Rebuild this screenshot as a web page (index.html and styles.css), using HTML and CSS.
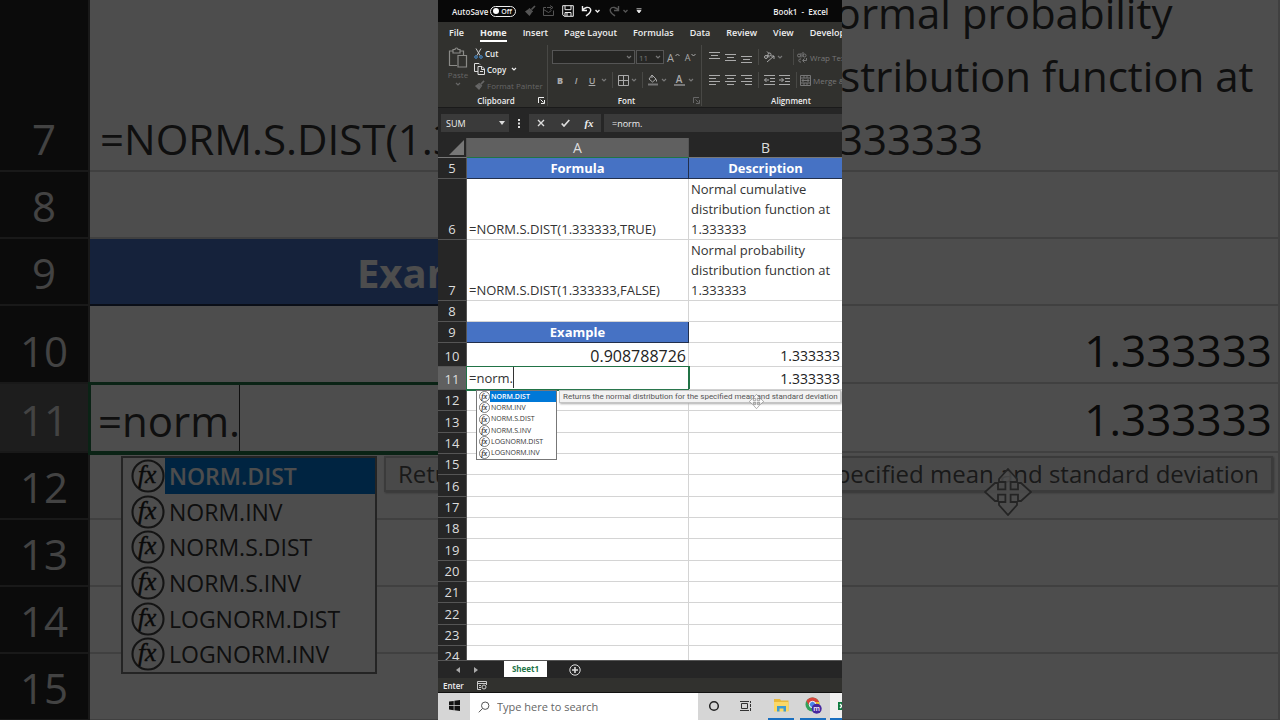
FILE: index.html
```html
<!doctype html>
<html lang="en">
<head>
    <meta charset="UTF-8">
    <meta name="viewport" content="width=device-width, initial-scale=1.0">
    <title>Book1 - Excel</title>
    <link rel="stylesheet" href="styles.css">
</head>
<body>
<!-- shared icons -->
<svg class="defs" aria-hidden="true">
    <symbol id="fx" viewBox="0 0 16 16">
        <circle cx="8" cy="8" r="7.300" fill="none" stroke="#444" stroke-width="1"/>
        <text x="7.600" y="11.200" text-anchor="middle" font-family="Liberation Serif, serif" font-style="italic" font-size="12" fill="#222" stroke="#222" stroke-width=".2">fx</text>
    </symbol>
    <symbol id="move" viewBox="0 0 24 24">
        <path d="M12 .5l4.500 5v1.500h-3.200v3.700H17V7.500h1.500l5 4.500-5 4.500H17v-3.200h-3.700V17h3.200v1.500l-4.500 5-4.500-5V17h3.200v-3.700H7v3.200H5.500l-5-4.500 5-4.500H7v3.200h3.700V7H7.500V5.500z" fill="#fff" fill-opacity=".8" stroke="#777" stroke-width=".9"/>
    </symbol>
    <symbol id="caret" viewBox="0 0 8 8">
        <path d="M2 3l2 2 2-2" fill="none" stroke="currentColor" stroke-width="1.2"/>
    </symbol>
    <symbol id="brush" viewBox="0 0 12 12">
        <path d="M11 1L7.500 4.500M5 3.500l3.500 3.500" fill="none" stroke="currentColor" stroke-width="1.700"/>
        <path d="M4.500 4L1 6.500l4.500 4.500L8 7.500z" fill="currentColor"/>
    </symbol>
</svg>

<main class="stage">
    <section class="backdrop" aria-hidden="true">
        <table class="sheet large">
            <colgroup><col class="c-num"><col class="c-a"><col></colgroup>
            <tr class="r-tall">
                <th>7</th>
                <td>=NORM.S.DIST(1.333333,FALSE)</td>
                <td>Normal probability<br>distribution function at<br>1.333333</td>
            </tr>
            <tr><th>8</th><td></td><td></td></tr>
            <tr><th>9</th><td class="head">Example</td><td></td></tr>
            <tr class="r-10"><th>10</th><td class="result">0.908788726</td><td class="num">1.333333</td></tr>
            <tr class="r-11">
                <th class="on">11</th>
                <td class="editing">
                    <input class="cell-input" value="=norm." aria-label="Cell A11, enlarged" tabindex="-1">
                    <ul class="suggest">
                        <li class="on"><svg><use href="#fx"/></svg><span>NORM.DIST</span></li>
                        <li><svg><use href="#fx"/></svg><span>NORM.INV</span></li>
                        <li><svg><use href="#fx"/></svg><span>NORM.S.DIST</span></li>
                        <li><svg><use href="#fx"/></svg><span>NORM.S.INV</span></li>
                        <li><svg><use href="#fx"/></svg><span>LOGNORM.DIST</span></li>
                        <li><svg><use href="#fx"/></svg><span>LOGNORM.INV</span></li>
                    </ul>
                </td>
                <td class="num has-tip">1.333333
                    <div class="tip"><span>Returns the normal distribution for the</span><span>specified mean and standard deviation</span></div>
                    <svg class="pointer"><use href="#move"/></svg>
                </td>
            </tr>
            <tr><th>12</th><td></td><td></td></tr>
            <tr><th>13</th><td></td><td></td></tr>
            <tr><th>14</th><td></td><td></td></tr>
            <tr><th>15</th><td></td><td></td></tr>
        </table>
    </section>

    <section class="phone">
        <header class="titlebar">
            <label class="autosave">AutoSave <input type="checkbox" class="toggle"><span class="track">Off</span></label>
            <div class="quick">
                <button class="dim" aria-label="Format painter"><svg width="12" height="12"><use href="#brush"/></svg></button>
                <button class="dim" aria-label="Mail">
                    <svg width="13" height="12" viewBox="0 0 13 12" fill="none" stroke="currentColor"><path d="M4 2.500H1.500v8h10v-5M1.500 4.500l5 3 3-2M5 2.500h4M8 .500l3 2-3 2"/></svg>
                </button>
                <button aria-label="Save">
                    <svg width="12" height="12" viewBox="0 0 12 12" fill="none" stroke="currentColor"><path d="M.7.7h10.600v10.600H2.200L.7 9.800zM3 .7v4h6v-4M3 11V7.500h6V11M5 8v3"/></svg>
                </button>
                <button class="wide" aria-label="Undo">
                    <svg width="20" height="12" viewBox="0 0 20 12" fill="none" stroke="currentColor" stroke-width="1.400"><path d="M1.500 1v4.500H6M1.500 5.500C3 2.500 8 1 9.500 4S7.500 9 5 11M14.500 5l2 2 2-2"/></svg>
                </button>
                <button class="wide dim" aria-label="Redo">
                    <svg width="20" height="12" viewBox="0 0 20 12" fill="none" stroke="currentColor" stroke-width="1.400"><path d="M9.500 1v4.500H5M9.500 5.500C8 2.500 3 1 1.500 4S3.500 9 6 11M14.500 5l2 2 2-2"/></svg>
                </button>
                <button class="slim" aria-label="Customize">
                    <svg width="6" height="6" viewBox="0 0 6 6"><path d="M.5 .800h5M1 2.500h4L3 5z" fill="currentColor" stroke="currentColor" stroke-width=".8"/></svg>
                </button>
            </div>
            <h1>Book1&nbsp; -&nbsp; Excel</h1>
        </header>

        <nav class="tabs">
            <a href="#file">File</a>
            <a href="#home" class="active">Home</a>
            <a href="#insert">Insert</a>
            <a href="#layout">Page Layout</a>
            <a href="#formulas">Formulas</a>
            <a href="#data">Data</a>
            <a href="#review">Review</a>
            <a href="#view">View</a>
            <a href="#developer">Developer</a>
        </nav>

        <div class="ribbon">
            <div class="group clipboard">
                <div class="tools">
                    <button class="paste">
                        <svg width="20" height="22" viewBox="0 0 20 22" fill="none" stroke="#8a8a87" stroke-width="1.200"><path d="M9 18.500H1.500V4H5M12 4h3.500v4M5 2.500h2c0-2 3-2 3 0h2V6H5zM10 8.500h8.500V20H10z"/></svg>
                        <span>Paste</span>
                        <svg width="8" height="8"><use href="#caret"/></svg>
                    </button>
                    <div class="stack">
                        <button>
                            <svg width="9" height="11" viewBox="0 0 9 11" fill="none"><path d="M2 .500l4 7M7 .500l-4 7" stroke="#ccc"/><circle cx="2" cy="9" r="1.300" stroke="#4a8fd0"/><circle cx="7" cy="9" r="1.300" stroke="#4a8fd0"/></svg>
                            Cut
                        </button>
                        <button>
                            <svg width="11" height="12" viewBox="0 0 11 12" fill="none" stroke="#ddd"><path d="M4 8.500H.500v-8H5l1 1M4 3.500h4l2.500 2.500v5.500H4zM7.500 3.500V6.500h3M6 8.500h3"/></svg>
                            Copy <svg class="next" width="8" height="8"><use href="#caret"/></svg>
                        </button>
                        <button class="off"><svg width="11" height="11"><use href="#brush"/></svg>Format Painter</button>
                    </div>
                </div>
                <div class="caption">Clipboard
                    <svg class="launch" width="7" height="7" viewBox="0 0 7 7" fill="none" stroke="currentColor"><path d="M.5 6V.5H6M2.500 2.500l3 3M6.500 3v3.500H3"/></svg>
                </div>
            </div>

            <div class="group font">
                <div class="row fields">
                    <select class="face" aria-label="Font"><option></option></select>
                    <svg class="drop over"><use href="#caret"/></svg>
                    <select class="size" aria-label="Font size"><option>11</option></select>
                    <svg class="drop over"><use href="#caret"/></svg>
                    <button class="grow" aria-label="Increase font size">A<svg width="5" height="9" viewBox="0 0 5 9" fill="none" stroke="currentColor"><path d="M.5 3l2-2 2 2"/></svg></button>
                    <button class="shrink" aria-label="Decrease font size">A<svg width="5" height="9" viewBox="0 0 5 9" fill="none" stroke="currentColor"><path d="M.5 1l2 2 2-2"/></svg></button>
                </div>
                <div class="row">
                    <button class="w16"><b>B</b></button>
                    <button class="w16"><i>I</i></button>
                    <button class="w16"><u>U</u></button>
                    <svg class="drop"><use href="#caret"/></svg>
                    <span class="rule"></span>
                    <button class="w14" aria-label="Borders"><svg width="11" height="11" viewBox="0 0 11 11" fill="none" stroke="currentColor"><path d="M.5.500h10v10H.5zM5.500.500v10M.5 5.500h10"/></svg></button>
                    <svg class="drop"><use href="#caret"/></svg>
                    <span class="rule"></span>
                    <button class="w14" aria-label="Fill color"><svg width="12" height="12" viewBox="0 0 12 12" fill="none" stroke="currentColor"><path d="M5 1l4 4-3.500 3L2 5zM5 1v3M9.500 5.500v2"/><path d="M1 10.500h10" stroke="#777" stroke-width="2"/></svg></button>
                    <svg class="drop"><use href="#caret"/></svg>
                    <button class="w16 color" aria-label="Font color">A</button>
                    <svg class="drop"><use href="#caret"/></svg>
                </div>
                <div class="caption">Font
                    <svg class="launch faint" width="7" height="7" viewBox="0 0 7 7" fill="none" stroke="currentColor"><path d="M.5 6V.5H6M2.500 2.500l3 3M6.500 3v3.500H3"/></svg>
                </div>
            </div>

            <div class="group align">
                <div class="row">
                    <button class="w16" aria-label="Top align"><svg width="11" height="12" viewBox="0 0 11 12" stroke="currentColor"><path d="M0 1.500h11M2 4.500h7M0 7.500h11"/></svg></button>
                    <button class="w16" aria-label="Middle align"><svg width="11" height="12" viewBox="0 0 11 12" stroke="currentColor"><path d="M0 3.500h11M2 6.500h7M0 9.500h11"/></svg></button>
                    <button class="w16" aria-label="Bottom align"><svg width="11" height="12" viewBox="0 0 11 12" stroke="currentColor"><path d="M0 5.500h11M2 8.500h7M0 11.500h11"/></svg></button>
                    <span class="rule"></span>
                    <button class="w14" aria-label="Orientation"><svg width="12" height="12" viewBox="0 0 12 12" stroke="currentColor" fill="none"><circle cx="3" cy="6" r="1.500"/><circle cx="6.500" cy="3.500" r="1.500"/><path d="M4 4l2 2.500M4 .500l2 2M4 11l7-6M8 5h3v3"/></svg></button>
                    <svg class="drop"><use href="#caret"/></svg>
                    <span class="rule far"></span>
                    <button class="text"><svg width="11" height="11" viewBox="0 0 11 11" stroke="currentColor" fill="none"><circle cx="2" cy="3.500" r="1.500"/><path d="M4 1v4.500M6 0v5"/><circle cx="7.500" cy="3.500" r="1.500"/><path d="M4 7C1 6.500 1 10.500 4 10M6 8.500h3.500V6M7.500 6.500l-2 2 2 2"/></svg>Wrap Text</button>
                </div>
                <div class="row">
                    <button class="w16" aria-label="Align left"><svg width="11" height="10" viewBox="0 0 11 10" stroke="currentColor"><path d="M0 .500h11M0 3.500h7M0 6.500h11M0 9.500h7"/></svg></button>
                    <button class="w16" aria-label="Center"><svg width="11" height="10" viewBox="0 0 11 10" stroke="currentColor"><path d="M0 .500h11M2 3.500h7M0 6.500h11M2 9.500h7"/></svg></button>
                    <button class="w16" aria-label="Align right"><svg width="11" height="10" viewBox="0 0 11 10" stroke="currentColor"><path d="M0 .500h11M4 3.500h7M0 6.500h11M4 9.500h7"/></svg></button>
                    <span class="rule"></span>
                    <button class="w14" aria-label="Decrease indent"><svg width="11" height="10" viewBox="0 0 11 10" stroke="currentColor" fill="none"><path d="M0 .500h11M6 3.500h5M6 6.500h5M0 9.500h11M5 5H.500M2.500 3l-2 2 2 2"/></svg></button>
                    <button class="w16" aria-label="Increase indent"><svg width="11" height="10" viewBox="0 0 11 10" stroke="currentColor" fill="none"><path d="M0 .500h11M6 3.500h5M6 6.500h5M0 9.500h11M0 5h4.500M2.500 3l2 2-2 2"/></svg></button>
                    <span class="rule"></span>
                    <button class="text"><svg width="11" height="11" viewBox="0 0 11 11" stroke="currentColor" fill="none"><path d="M.5.500h10v10H.5zM.5 3h10M.5 8h10M4 .500V3M7 .500V3M4 8v2.500M7 8v2.500M2 5.500h7M3.500 4L2 5.500 3.500 7M7.500 4L9 5.500 7.500 7"/></svg>Merge &amp; Center</button>
                </div>
                <div class="caption">Alignment</div>
            </div>
        </div>

        <div class="formula">
            <div class="namebox">
                <input value="SUM" aria-label="Name box">
                <svg width="6" height="4" viewBox="0 0 6 4"><path d="M0 0h6L3 4z" fill="#ddd"/></svg>
            </div>
            <svg class="grip" width="2" height="9" viewBox="0 0 2 9"><path d="M0 0h2v2H0zM0 3.500h2v2H0zM0 7h2v2H0z" fill="#ddd"/></svg>
            <div class="actions">
                <button aria-label="Cancel"><svg width="8" height="8" viewBox="0 0 8 8"><path d="M1 1l6 6M7 1L1 7" stroke="#ddd" stroke-width="1.400"/></svg></button>
                <button aria-label="Enter"><svg width="9" height="8" viewBox="0 0 9 8"><path d="M.7 4.500L3 7l5.300-6" fill="none" stroke="#ddd" stroke-width="1.700"/></svg></button>
                <button class="fn" aria-label="Insert function">fx</button>
            </div>
            <input class="bar" value="=norm." aria-label="Formula bar">
        </div>

        <div class="grid">
            <table class="sheet small">
                <colgroup><col class="c-num"><col class="c-a"><col></colgroup>
                <tr class="letters">
                    <th class="corner"><svg width="15" height="15" viewBox="0 0 15 15"><path d="M15 0v15H0z" fill="#777"/></svg></th>
                    <th class="on">A</th><th>B</th>
                </tr>
                <tr><th>5</th><td class="head">Formula</td><td class="head">Description</td></tr>
                <tr class="r-tall">
                    <th>6</th>
                    <td>=NORM.S.DIST(1.333333,TRUE)</td>
                    <td>Normal cumulative<br>distribution function at<br>1.333333</td>
                </tr>
                <tr class="r-tall">
                    <th>7</th>
                    <td>=NORM.S.DIST(1.333333,FALSE)</td>
                    <td>Normal probability<br>distribution function at<br>1.333333</td>
                </tr>
                <tr><th>8</th><td></td><td></td></tr>
                <tr><th>9</th><td class="head">Example</td><td></td></tr>
                <tr class="r-10"><th>10</th><td class="result">0.908788726</td><td class="num">1.333333</td></tr>
                <tr class="r-11">
                    <th class="on">11</th>
                    <td class="editing">
                        <input class="cell-input" value="=norm." aria-label="Cell A11">
                        <ul class="suggest">
                            <li class="on"><svg><use href="#fx"/></svg><span>NORM.DIST</span></li>
                            <li><svg><use href="#fx"/></svg><span>NORM.INV</span></li>
                            <li><svg><use href="#fx"/></svg><span>NORM.S.DIST</span></li>
                            <li><svg><use href="#fx"/></svg><span>NORM.S.INV</span></li>
                            <li><svg><use href="#fx"/></svg><span>LOGNORM.DIST</span></li>
                            <li><svg><use href="#fx"/></svg><span>LOGNORM.INV</span></li>
                        </ul>
                    </td>
                    <td class="num has-tip">1.333333
                        <div class="tip">Returns the normal distribution for the specified mean and standard deviation</div>
                        <svg class="pointer"><use href="#move"/></svg>
                    </td>
                </tr>
                <tr><th>12</th><td></td><td></td></tr>
                <tr><th>13</th><td></td><td></td></tr>
                <tr><th>14</th><td></td><td></td></tr>
                <tr><th>15</th><td></td><td></td></tr>
                <tr><th>16</th><td></td><td></td></tr>
                <tr><th>17</th><td></td><td></td></tr>
                <tr><th>18</th><td></td><td></td></tr>
                <tr><th>19</th><td></td><td></td></tr>
                <tr><th>20</th><td></td><td></td></tr>
                <tr><th>21</th><td></td><td></td></tr>
                <tr><th>22</th><td></td><td></td></tr>
                <tr><th>23</th><td></td><td></td></tr>
                <tr><th>24</th><td></td><td></td></tr>
            </table>
        </div>

        <div class="sheetbar">
            <button aria-label="Previous sheet"><svg width="4" height="6" viewBox="0 0 4 6"><path d="M4 0v6L0 3z" fill="#aaa"/></svg></button>
            <button aria-label="Next sheet"><svg width="4" height="6" viewBox="0 0 4 6"><path d="M0 0v6l4-3z" fill="#aaa"/></svg></button>
            <a href="#sheet1">Sheet1</a>
            <button aria-label="New sheet"><svg width="12" height="12" viewBox="0 0 12 12" fill="none" stroke="#ddd"><circle cx="6" cy="6" r="5.200"/><path d="M6 3v6M3 6h6" stroke-width="1.600"/></svg></button>
        </div>
        <div class="status">
            Enter
            <svg width="10" height="9" viewBox="0 0 10 9" fill="none" stroke="#ccc"><path d="M9.500 4V.500H.500v8H4M.500 2.500h9M2 4.500h2M2 6.500h2"/><circle cx="7" cy="6" r="2"/></svg>
        </div>
        <footer class="taskbar">
            <button class="start" aria-label="Start"><svg width="11" height="11" viewBox="0 0 11 11"><path d="M0 1.600l4.700-.7v4.300H0zM5.400.800L11 0v5.200H5.400zM0 5.900h4.700v4.300L0 9.500zM5.400 5.900H11V11l-5.600-.8z" fill="#111"/></svg></button>
            <label class="search">
                <svg width="12" height="12" viewBox="0 0 12 12" fill="none" stroke="#555"><circle cx="7.200" cy="4.700" r="3.700"/><path d="M4.500 7.500L.8 11.300"/></svg>
                <input placeholder="Type here to search" aria-label="Search">
            </label>
            <button aria-label="Cortana"><svg width="12" height="12" viewBox="0 0 12 12"><circle cx="6" cy="6" r="4.300" fill="none" stroke="#222" stroke-width="1.500"/></svg></button>
            <button aria-label="Task view"><svg width="12" height="10" viewBox="0 0 12 10" fill="none" stroke="#333"><path d="M1.500 2.500h6v5h-6zM.5 0v1M8.500 0v1M0 .500h9M0 9.500h9M10.500 0v2M10.500 3v3M10.500 7v3"/></svg></button>
            <button class="open" aria-label="File Explorer"><svg width="15" height="13" viewBox="0 0 15 13"><path d="M0 0h6l1 1.500h7.500V12H0z" fill="#e9b93a"/><path d="M0 3h14.500v9.500H0z" fill="#fbd867"/><path d="M3 12.500V7h9v5.500H9.500V9.500h-4v3z" fill="#3f9bd0"/></svg></button>
            <button class="open" aria-label="Chrome">
                <svg width="17" height="17" viewBox="0 0 17 17">
                    <circle cx="7.500" cy="7.500" r="7" fill="#34a15a"/>
                    <path d="M1.400 4A7 7 0 0 1 14 5H7.500L4.500 9z" fill="#d9453b"/>
                    <path d="M14 5a7 7 0 0 1-6.500 9.500L10 8V5z" fill="#f5c52e"/>
                    <circle cx="7.500" cy="7.500" r="3.200" fill="#4a86e8" stroke="#fff"/>
                    <circle cx="11.700" cy="11.700" r="5" fill="#4527a0"/>
                    <text x="11.700" y="14" text-anchor="middle" font-family="Open Sans, sans-serif" font-size="7" fill="#fff">m</text>
                </svg>
            </button>
            <button class="open current" aria-label="Excel"><svg width="14" height="14" viewBox="0 0 14 14"><path d="M4 1h10v12H4z" fill="#21a366"/><path d="M0 3h8v8H0z" fill="#107c41"/><path d="M2 5l4 4M6 5L2 9" stroke="#fff" stroke-width="1.400"/></svg></button>
        </footer>
    </section>
</main>
</body>
</html>
```
FILE: styles.css
```css
* {
    box-sizing: border-box;
}

html, body {
    height: 100%;
    margin: 0;
    overflow: hidden;
    background: #000;
    font-family: "Open Sans", "Noto Sans", sans-serif;
}

button, input, select {
    font: inherit;
    color: inherit;
    background: none;
    border: 0;
    padding: 0;
    margin: 0;
    border-radius: 0;
    outline: 0;
}

button {
    display: flex;
    align-items: center;
    justify-content: center;
    flex-shrink: 0;
    white-space: nowrap;
}

a {
    color: inherit;
    text-decoration: none;
}

svg {
    flex-shrink: 0;
    display: block;
}

.defs {
    position: absolute;
    width: 0;
    height: 0;
}

/* both layers share one grid cell */
.stage {
    display: grid;
    grid-template: 100vh / 100%;
}

.backdrop, .phone {
    grid-area: 1 / 1;
    min-width: 0;
    min-height: 0;
    overflow: hidden;
}

.backdrop {
    display: flex;
    flex-direction: column;
    justify-content: flex-end;
    opacity: .3;
    background: #fff;
}

.phone {
    z-index: 1;
    justify-self: center;
    height: 100vh;
    aspect-ratio: 101 / 180;
    display: flex;
    flex-direction: column;
    background: #262626;
    color: #eee;
    font-size: 8px;
    font-weight: 600;
}

/* title bar */
.titlebar {
    display: flex;
    align-items: center;
    height: 22px;
    padding: 0 14px;
    background: #080808;
}

.titlebar h1 {
    margin: 0 0 0 auto;
    font-size: 8px;
    font-weight: 600;
    white-space: nowrap;
}

.autosave {
    display: flex;
    align-items: center;
    gap: 2px;
}

.toggle {
    display: none;
}

.track {
    display: flex;
    align-items: center;
    gap: 2px;
    width: 26px;
    height: 11px;
    padding-left: 2px;
    border: 1px solid #eee;
    border-radius: 6px;
    font-size: 7px;
}

.track::before {
    content: "";
    width: 6px;
    height: 6px;
    border-radius: 50%;
    background: #fff;
}

.quick {
    display: flex;
    align-items: center;
    margin-left: 4px;
}

.quick button {
    width: 19px;
    height: 18px;
}

.quick .wide {
    width: 28px;
}

.quick .slim {
    width: 11px;
}

.dim {
    color: #555;
}

/* ribbon */
.tabs {
    display: flex;
    gap: 16px;
    height: 23px;
    padding: 3px 0 0 11px;
    background: #31312e;
    font-size: 9px;
    line-height: 15px;
    white-space: nowrap;
}

.tabs a {
    height: 17px;
}

.tabs .active {
    font-weight: 700;
    border-bottom: 2px solid #fff;
}

.ribbon {
    display: flex;
    height: 63px;
    padding-bottom: 1px;
    background: #31312e;
    border-bottom: 1px solid #1a1a1a;
    overflow: hidden;
}

.group {
    display: flex;
    flex-direction: column;
    flex-shrink: 0;
    border-right: 1px solid #484845;
    color: #aaa;
}

.caption {
    display: flex;
    align-items: center;
    justify-content: center;
    position: relative;
    margin-top: auto;
    height: 12px;
    color: #eee;
}

.launch {
    position: absolute;
    right: 1px;
    top: 3px;
}

.faint {
    color: #666;
}

.clipboard {
    width: 110px;
    padding-left: 8px;
    padding-right: 1px;
}

.tools {
    display: flex;
    gap: 4px;
}

.paste {
    flex-direction: column;
    justify-content: flex-start;
    width: 24px;
    padding-top: 2px;
    color: #666;
    font-weight: 400;
    line-height: 11px;
}

.stack {
    display: flex;
    flex-direction: column;
}

.stack button {
    justify-content: flex-start;
    gap: 2px;
    height: 16px;
    color: #eee;
}

.stack .off {
    color: #666;
    font-weight: 400;
}

.next {
    margin-left: 2px;
}

.font {
    width: 154px;
    padding-left: 4px;
}

.align {
    width: 175px;
    padding-left: 4px;
}

.row {
    display: flex;
    align-items: center;
    height: 22px;
}

.row:first-child {
    height: 24px;
}

.w16 {
    width: 16px;
}

.w14 {
    width: 14px;
}

.w16 b, .w16 i, .w16 u {
    font-size: 9px;
}

.drop {
    width: 8px;
    height: 8px;
    color: #777;
}

.drop.over {
    margin-left: -10px;
    margin-right: 3px;
    pointer-events: none;
}

.rule {
    width: 8px;
    height: 16px;
    background: linear-gradient(#484845, #484845) center / 1px 100% no-repeat;
}

.rule.far {
    margin-left: 5px;
}

.color {
    flex-direction: column;
    margin-left: 3px;
    font-size: 10px;
    line-height: 10px;
}

.color::after {
    content: "";
    width: 11px;
    height: 2px;
    background: #777;
}

.text {
    gap: 2px;
    color: #777;
    font-weight: 400;
}

.face, .size {
    height: 14px;
    border: 1px solid #555;
    background: #262624;
    color: #777;
    padding: 0 2px;
    font-weight: 400;
    appearance: none;
}

.face {
    width: 83px;
}

.size {
    width: 28px;
}

.grow, .shrink {
    width: 17px;
    gap: 1px;
    font-size: 11px;
    font-weight: 400;
}

.shrink {
    font-size: 9px;
}

/* formula bar */
.formula {
    display: flex;
    align-items: center;
    height: 30px;
    padding-left: 3px;
    font-size: 9px;
    font-weight: 400;
}

.namebox, .actions, .bar {
    height: 18px;
    background: #3a3a3a;
}

.namebox {
    display: flex;
    align-items: center;
    width: 68px;
    padding: 0 4px 0 5px;
}

.namebox input {
    flex: 1;
    min-width: 0;
}

.grip {
    margin: 0 9px;
}

.actions {
    display: flex;
    margin-right: 3px;
}

.actions button {
    width: 24px;
}

.fn {
    font-family: "Liberation Serif", serif;
    font-size: 11px;
    font-style: italic;
    font-weight: 700;
}

.bar {
    flex: 1;
    min-width: 0;
    padding-left: 8px;
}

/* worksheet */
.grid {
    flex: 1;
    min-height: 0;
    overflow: hidden;
    background: #fff;
}

.sheet {
    width: 100%;
    flex-shrink: 0;
    table-layout: fixed;
    border-collapse: separate;
    border-spacing: 0;
    background: #fff;
    color: #333;
    font-weight: 400;
}

.sheet th, .sheet td {
    border: 0 solid #d4d4d4;
    border-width: 0 1px 1px 0;
    white-space: nowrap;
    vertical-align: bottom;
}

.sheet th {
    padding: 0;
    background: #262626;
    border-color: #555;
    color: #ddd;
    font-weight: 400;
    text-align: center;
}

.sheet th.on {
    background: #606060;
}

.sheet .head {
    background: #4672c4;
    border-color: #222f4c;
    color: #fff;
    font-weight: 700;
    text-align: center;
}

.sheet .num, .sheet .result {
    text-align: right;
    color: #222;
}

.sheet .editing, .has-tip {
    position: relative;
}

.sheet .editing {
    border-color: #217346;
    background: #fff;
    vertical-align: top;
}

.cell-input {
    display: block;
    border-right: 1px solid #333;
    color: #333;
}

.suggest {
    position: absolute;
    z-index: 2;
    top: 100%;
    display: flex;
    flex-direction: column;
    margin: 0;
    padding: 0;
    list-style: none;
    background: #fff;
    border: 1px solid #777;
}

.suggest li {
    display: flex;
    align-items: center;
    flex: 1;
}

.suggest span {
    flex: 1;
    align-self: stretch;
    display: flex;
    align-items: center;
}

.suggest .on span {
    background: #0078d7;
    color: #fff;
    font-weight: 600;
}

.tip {
    position: absolute;
    z-index: 1;
    background: #f2f2f2;
    border: 1px solid #c4c4c4;
    box-shadow: 1px 1px 2px #aaa;
    color: #555;
    text-align: left;
}

.pointer {
    position: absolute;
    z-index: 2;
}

/* worksheet, normal size */
.small {
    font-size: 13px;
    line-height: 20px;
}

.small .c-num {
    width: 29px;
}

.small .c-a {
    width: 222px;
}

.small tr {
    height: 21px;
}

.small tr:nth-child(3n+1) {
    height: 22px;
}

.small td {
    padding: 0 2px;
}

.small tr > :last-child {
    border-right-width: 0;
}

.small tr.letters {
    height: 20px;
}

.small .letters th {
    border-bottom-color: #777;
    font-size: 14px;
    line-height: 19px;
}

.small .letters .on {
    border-bottom-color: #217346;
}

.corner svg {
    margin: 0 2px 2px auto;
}

.small tr.r-tall {
    height: 61px;
}

.small tr.r-10 {
    height: 24px;
}

.small tr.r-11 {
    height: 23px;
}

.small .result {
    font-size: 16px;
}

.small .num {
    font-size: 14px;
}

.small .editing {
    border-bottom-width: 1px;
    outline: 1px solid #217346;
}

.small .cell-input {
    width: 45px;
    height: 21px;
}

.small .suggest {
    left: 9px;
    margin-top: 1px;
    width: 81px;
    height: 70px;
    font-size: 7px;
    line-height: 10px;
}

.small .suggest svg {
    width: 11px;
    height: 11px;
    margin-left: 2px;
}

.small .suggest span {
    padding-left: 1px;
}

.small .tip {
    left: -130px;
    right: 1px;
    top: 100%;
    margin-top: 1px;
    padding: 0 3px;
    font-family: Roboto, "Open Sans", sans-serif;
    font-size: 8px;
    line-height: 11px;
}

.small .pointer {
    width: 15px;
    height: 15px;
    left: 60px;
    top: 27px;
}

/* worksheet, enlarged */
.large {
    margin-bottom: -1px;
    font-size: 42px;
    line-height: 63px;
}

.large .c-num {
    width: 90px;
}

.large .c-a {
    width: 704px;
}

.large tr {
    height: 67px;
}

.large tr.r-tall {
    height: 193px;
}

.large tr.r-10 {
    height: 78px;
}

.large tr.r-11 {
    height: 69px;
}

.large th, .large td {
    border-width: 0 2px 2px 0;
}

.large td {
    padding: 0 8px 0 10px;
}

.large .head {
    font-size: 40px;
}

.large .result {
    font-size: 50px;
}

.large .num {
    font-size: 44px;
    padding-right: 6px;
}

.large .editing {
    padding-left: 8px;
    outline: 3px solid #217346;
    outline-offset: -1px;
}

.large .cell-input {
    width: 142px;
    height: 67px;
    padding-top: 5px;
}

.large .suggest {
    left: 31px;
    margin-top: 5px;
    width: 256px;
    height: 218px;
    border-width: 2px;
    font-size: 23px;
    line-height: 32px;
}

.large .suggest svg {
    width: 34px;
    height: 34px;
    margin-left: 8px;
}

.large .suggest span {
    padding-left: 4px;
}

.large .tip {
    display: flex;
    justify-content: space-between;
    left: -410px;
    right: 5px;
    top: 100%;
    margin-top: 5px;
    padding: 0 12px;
    border-width: 2px;
    font-size: 24px;
    line-height: 32px;
}

/* the first half gives way so the sentence ends at the right padding */
.large .tip span:first-child {
    min-width: 0;
    overflow: hidden;
}

.large .tip span:last-child {
    flex-shrink: 0;
}

.large .pointer {
    width: 48px;
    height: 48px;
    right: 246px;
    top: 84px;
}

/* bottom bars */
.sheetbar {
    display: flex;
    align-items: flex-start;
    height: 18px;
    padding-left: 11px;
    border-top: 1px solid #555;
}

.sheetbar button {
    width: 18px;
    height: 17px;
}

.sheetbar a {
    width: 43px;
    height: 16px;
    margin: 0 19px;
    background: #fff;
    color: #217346;
    font-weight: 700;
    line-height: 16px;
    text-align: center;
}

.status {
    display: flex;
    align-items: center;
    gap: 13px;
    height: 15px;
    padding-left: 5px;
    background: #31312e;
    border-bottom: 1px solid #111;
}

.taskbar {
    display: flex;
    height: 27px;
    background: #d6d6d6;
    overflow: hidden;
}

.taskbar button {
    width: 32px;
    border-bottom: 2px solid transparent;
}

.taskbar .open {
    width: 26px;
    margin-left: 6px;
    border-bottom-color: #1a6fc0;
}

.taskbar .current {
    justify-content: flex-start;
    margin-left: 4px;
    padding-left: 8px;
    background: #f0f0f0;
}

.search {
    display: flex;
    align-items: center;
    gap: 7px;
    flex: 0 0 228px;
    padding-left: 8px;
    background: #fff;
    color: #555;
    font-size: 11px;
    font-weight: 400;
}

.search input {
    flex: 1;
    min-width: 0;
}

.search input::placeholder {
    color: #666;
}
```
